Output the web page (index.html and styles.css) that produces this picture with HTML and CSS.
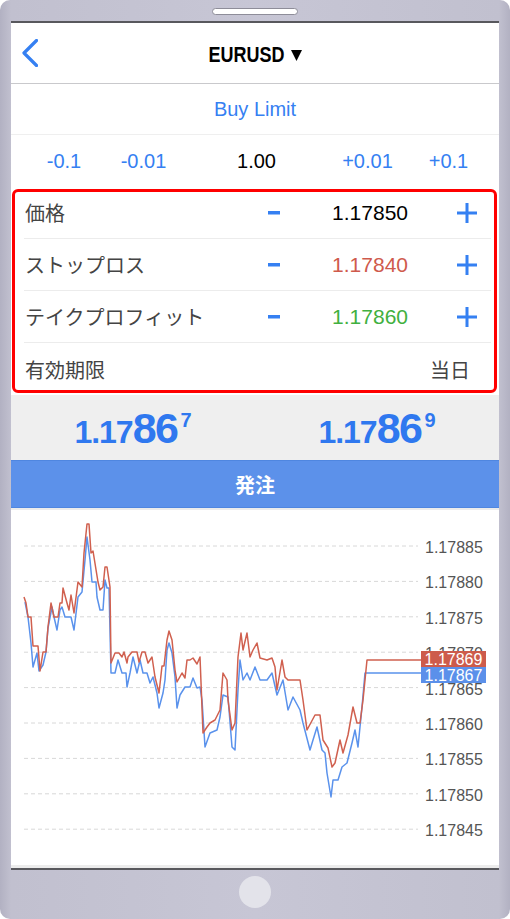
FILE: index.html
```html
<!DOCTYPE html>
<html lang="ja">
<head>
<meta charset="utf-8">
<title>EURUSD Buy Limit</title>
<link rel="stylesheet" href="styles.css">
</head>
<body>
<div class="device">
  <div class="device-top"><div class="speaker"></div></div>
  <div class="screen">
    <header class="nav">
      <svg class="back" width="16" height="28" viewBox="0 0 16 28"><polyline points="14.5,1.5 2,14 14.5,26.5"/></svg>
      <div class="title"><span class="symbol">EURUSD</span><svg class="caret" width="11" height="11" viewBox="0 0 11 11"><polygon points="0,0 11,0 5.5,11"/></svg></div>
      <span></span>
    </header>
    <div class="type">Buy Limit</div>
    <div class="steps">
      <span class="step">-0.1</span>
      <span class="step">-0.01</span>
      <span class="volume">1.00</span>
      <span class="step">+0.01</span>
      <span class="step">+0.1</span>
    </div>
    <div class="fields">
      <div class="field">
        <span class="label">価格</span>
        <svg class="minus" width="12" height="4" viewBox="0 0 12 4"><rect x="0" y="0" width="12" height="3.5"/></svg>
        <span class="value">1.17850</span>
        <span></span>
        <svg class="plus" width="20" height="20" viewBox="0 0 20 20"><rect x="8.5" y="0" width="3" height="20"/><rect x="0" y="8.5" width="20" height="3"/></svg>
      </div>
      <div class="field">
        <span class="label">ストップロス</span>
        <svg class="minus" width="12" height="4" viewBox="0 0 12 4"><rect x="0" y="0" width="12" height="3.5"/></svg>
        <span class="value sl">1.17840</span>
        <span></span>
        <svg class="plus" width="20" height="20" viewBox="0 0 20 20"><rect x="8.5" y="0" width="3" height="20"/><rect x="0" y="8.5" width="20" height="3"/></svg>
      </div>
      <div class="field">
        <span class="label">テイクプロフィット</span>
        <svg class="minus" width="12" height="4" viewBox="0 0 12 4"><rect x="0" y="0" width="12" height="3.5"/></svg>
        <span class="value tp">1.17860</span>
        <span></span>
        <svg class="plus" width="20" height="20" viewBox="0 0 20 20"><rect x="8.5" y="0" width="3" height="20"/><rect x="0" y="8.5" width="20" height="3"/></svg>
      </div>
      <div class="field field-expiry">
        <span class="label">有効期限</span>
        <span class="expiry">当日</span>
      </div>
    </div>
    <div class="quotes">
      <div class="quote"><span class="q-small">1.17</span><span class="q-big">86</span><span class="q-sup">7</span></div>
      <div class="quote"><span class="q-small">1.17</span><span class="q-big">86</span><span class="q-sup">9</span></div>
    </div>
    <button class="order">発注</button>
    <div class="chart">
      <svg width="488" height="355" viewBox="11 510 488 355">
        <defs>
          <clipPath id="axis-clip">
            <rect x="11" y="510" width="410" height="355"/>
            <rect x="421" y="510" width="78" height="141"/>
            <rect x="421" y="683" width="78" height="182"/>
          </clipPath>
        </defs>
        <g class="grid">
          <line x1="24" x2="418" y1="546" y2="546"/>
          <line x1="24" x2="418" y1="581.4" y2="581.4"/>
          <line x1="24" x2="418" y1="616.8" y2="616.8"/>
          <line x1="24" x2="418" y1="652.2" y2="652.2"/>
          <line x1="24" x2="418" y1="687.6" y2="687.6"/>
          <line x1="24" x2="418" y1="723" y2="723"/>
          <line x1="24" x2="418" y1="758.4" y2="758.4"/>
          <line x1="24" x2="418" y1="793.8" y2="793.8"/>
          <line x1="24" x2="418" y1="829.2" y2="829.2"/>
        </g>
        <g class="axis">
          <text x="425" y="553">1.17885</text>
          <text x="425" y="588.4">1.17880</text>
          <text x="425" y="623.8">1.17875</text>
          <text x="425" y="730">1.17860</text>
          <text x="425" y="765.4">1.17855</text>
          <text x="425" y="800.8">1.17850</text>
          <text x="425" y="836.2">1.17845</text>
        </g>
        <g class="axis" clip-path="url(#axis-clip)">
          <text x="425" y="659.2">1.17870</text>
          <text x="425" y="694.6">1.17865</text>
        </g>
        <polyline class="bid" points="25,602 28,617 31,643 33,667 35,660 37,653 39,671 43,665 46,652 48,628 52,607 54,617 57,630 60,610 62,607 65,617 71,617 74,630 78,597 82,592 85,560 87,537 90,560 92,582 96,582 97,597 100,610 103,610 105,580 107,588 109,588 111,673 115,673 118,660 122,673 126,673 127,687 130,673 133,657 137,673 140,660 143,673 147,673 150,683 153,677 157,693 159,708 163,693 165,680 167,650 169,643 172,653 175,677 177,708 180,695 185,687 190,687 193,678 197,688 200,687 202,700 205,747 210,733 217,730 220,717 223,695 228,697 232,747 235,750 238,690 240,660 243,680 247,673 250,680 255,667 260,680 267,680 272,673 277,695 283,680 288,710 293,697 300,710 303,723 310,750 313,740 317,727 322,750 325,753 327,773 331,797 333,780 338,780 342,767 347,763 352,743 355,730 358,747 362,707 365,673 421,673"/>
        <polyline class="ask" points="24,597 26,603 28,617 31,617 33,646 38,646 40,671 43,652 46,652 48,627 51,603 54,617 58,617 60,603 62,603 63,588 67,603 69,610 71,595 74,613 78,582 82,587 84,553 87,524 89,524 91,553 93,551 98,582 100,590 103,587 105,567 107,567 110,587 111,663 115,653 119,653 122,657 124,652 127,663 128,657 132,652 137,652 139,662 142,652 145,652 148,663 152,657 155,677 159,693 162,666 164,666 167,640 169,631 172,640 175,670 177,682 182,673 185,678 187,660 190,660 193,658 197,664 200,657 203,733 207,727 210,723 215,720 220,710 223,673 227,680 228,700 232,730 235,723 238,657 241,633 243,650 247,633 250,657 253,650 257,643 260,658 267,660 272,658 275,667 277,690 282,660 285,677 288,680 300,680 303,700 307,730 315,715 320,715 323,740 328,748 332,767 335,763 340,740 343,753 348,735 353,707 357,723 360,723 363,700 367,660 421,660"/>
        <rect class="tag-ask" x="421" y="651" width="65" height="16"/>
        <text class="tag-text" x="453.5" y="665">1.17869</text>
        <rect class="tag-bid" x="421" y="667" width="65" height="16"/>
        <text class="tag-text" x="453.5" y="681">1.17867</text>
      </svg>
    </div>
  </div>
  <div class="device-bottom"><div class="home"></div></div>
</div>
</body>
</html>
```
FILE: styles.css
```css
* {
  box-sizing: border-box;
  margin: 0;
  padding: 0;
}

html, body {
  background: #ffffff;
}

body {
  margin: 0;
  font-family: "Liberation Sans", "Noto Sans CJK JP", sans-serif;
}

.device {
  width: 510px;
  height: 919px;
  border-radius: 10px;
  background: linear-gradient(to right, #b2b1c2 0, #c1c0cf 11px, #c7c6d5 50%, #c1c0cf calc(100% - 11px), #b2b1c2 100%);
  display: flex;
  flex-direction: column;
  align-items: center;
}

.device-top {
  height: 21px;
  width: 100%;
  display: flex;
  align-items: center;
  justify-content: center;
}

.speaker {
  width: 86px;
  height: 7px;
  margin-top: 1px;
  border-radius: 4px;
  background: #ffffff;
  border: 1px solid #8e8d99;
}

.screen {
  width: 488px;
  background: #ffffff;
  border-top: 2px solid #58585d;
  border-bottom: 2px solid #58585d;
  display: flex;
  flex-direction: column;
}

/* header */
.nav {
  height: 61px;
  border-bottom: 1px solid #c9c9cc;
  display: grid;
  grid-template-columns: 48px 1fr 48px;
  align-items: center;
  padding: 0 11px;
}

.back {
  display: block;
}

.back polyline {
  fill: none;
  stroke: #3580f2;
  stroke-width: 3.2;
  stroke-linecap: round;
  stroke-linejoin: round;
}

.title {
  display: flex;
  align-items: center;
  justify-content: center;
  gap: 6px;
  font-weight: bold;
  font-size: 22px;
  color: #000000;
  padding-top: 3px;
}

.symbol {
  display: inline-block;
  transform: scaleX(0.8);
  margin: 0 -9px;
  font-size: 22.5px;
}

.caret {
  display: block;
  fill: #000000;
  margin-top: 2px;
}

/* order type */
.type {
  height: 51px;
  border-bottom: 1px solid #efefef;
  display: flex;
  align-items: center;
  justify-content: center;
  color: #3580f2;
  font-size: 20px;
}

/* volume steps */
.steps {
  height: 52px;
  display: grid;
  grid-template-columns: 80px 79px 147px 75px 87px;
  align-items: center;
  padding-left: 13px;
  font-size: 20px;
  text-align: center;
}

.step {
  color: #3580f2;
}

.volume {
  color: #000000;
}

/* fields */
.fields {
  position: relative;
}

.fields::after {
  content: "";
  position: absolute;
  top: 2px;
  left: 1px;
  right: 2px;
  bottom: 2px;
  border: 3px solid #ff0000;
  border-radius: 6px;
  pointer-events: none;
}

.field {
  height: 52px;
  margin: 0 8px 0 13px;
  border-bottom: 1px solid #ececec;
  display: grid;
  grid-template-columns: 1fr 24px 122px 40px 38px;
  align-items: center;
  padding: 0 5px 0 1px;
  font-size: 20px;
}

.label {
  color: #444444;
}

.minus,
.plus {
  display: block;
  justify-self: center;
  fill: #3580f2;
}

.value {
  text-align: right;
  color: #000000;
  font-size: 21px;
}

.value.sl {
  color: #cf5a4c;
}

.value.tp {
  color: #41b040;
}

.field-expiry {
  display: flex;
  justify-content: space-between;
  padding-right: 21px;
  border-bottom: none;
}

.expiry {
  color: #444444;
}

/* quotes */
.quotes {
  height: 65px;
  background: #efefef;
  display: grid;
  grid-template-columns: 1fr 1fr;
  align-items: center;
  justify-items: center;
  padding-top: 6px;
}

.quote {
  color: #2f78ef;
  font-weight: bold;
  font-size: 43px;
  line-height: 43px;
  white-space: nowrap;
}

.q-small {
  font-size: 32px;
  letter-spacing: -1px;
}

.q-big {
  letter-spacing: -1.5px;
}

.q-sup {
  font-size: 20px;
  line-height: 20px;
  vertical-align: 16px;
  margin-left: 3px;
}

/* order button */
.order {
  height: 48px;
  width: 100%;
  border: none;
  border-top: 1px solid #4f86e0;
  border-bottom: 1px solid #4f86e0;
  background: #5c91ea;
  color: #ffffff;
  font-family: "Liberation Sans", "Noto Sans CJK JP", sans-serif;
  font-weight: bold;
  font-size: 20px;
}

/* chart */
.chart {
  height: 360px;
  border-top: 2px solid #ececec;
  border-bottom: 3px solid #ececec;
}

.chart svg {
  display: block;
}

.grid line {
  stroke: #d8d8d8;
  stroke-width: 1;
  stroke-dasharray: 4 3;
}

.axis text {
  font-family: "Liberation Sans", sans-serif;
  font-size: 16px;
  fill: #555555;
}

.ask,
.bid {
  fill: none;
  stroke-width: 1.5;
  stroke-linejoin: round;
}

.ask {
  stroke: #d0604f;
}

.bid {
  stroke: #5a92ec;
}

.tag-ask {
  fill: #cd5b4b;
}

.tag-bid {
  fill: #5b90ea;
}

.tag-text {
  font-family: "Liberation Sans", sans-serif;
  font-size: 16px;
  fill: #ffffff;
  text-anchor: middle;
}

/* bottom bezel */
.device-bottom {
  flex: 1;
  width: 100%;
  display: flex;
  align-items: center;
  justify-content: center;
  padding-bottom: 5px;
}

.home {
  width: 32px;
  height: 32px;
  border-radius: 50%;
  background: #e3e3ea;
}
```
